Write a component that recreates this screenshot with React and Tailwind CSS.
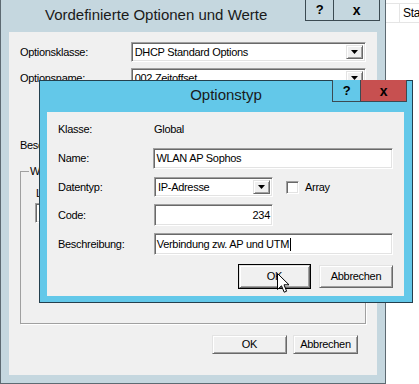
import React from "react";

const sunken =
  "border border-t-[#a0a0a0] border-l-[#a0a0a0] border-b-white border-r-white shadow-[inset_1px_1px_0_#696969,inset_-1px_-1px_0_#e3e3e3] bg-white";
const raised =
  "border border-t-[#e3e3e3] border-l-[#e3e3e3] border-b-[#696969] border-r-[#696969] shadow-[inset_1px_1px_0_#ffffff,inset_-1px_-1px_0_#a0a0a0] bg-[#f0f0f0]";

function Arrow() {
  return (
    <svg width="7" height="4" viewBox="0 0 7 4">
      <path d="M0 0H7L3.5 4Z" fill="#000" />
    </svg>
  );
}

function Combo({ w, text }) {
  return (
    <div className={`${sunken} ${w} h-[20px] flex items-stretch p-[2px]`}>
      <div className="flex-1 pl-[1px] flex items-center whitespace-nowrap overflow-hidden">{text}</div>
      <div className={`${raised} w-[17px] flex items-center justify-center`}>
        <Arrow />
      </div>
    </div>
  );
}

function Btn({ children, w, focus }) {
  const inner = (
    <div className={`${raised} ${w} h-[23px] flex items-center justify-center`}>{children}</div>
  );
  if (focus) return <div className="border border-black">{inner}</div>;
  return inner;
}

function CapButtons({ frame, red }) {
  return (
    <div className="absolute top-[-1px] right-[5px] flex h-[22px]">
      <div className={`w-[29px] border border-t-0 border-[#3b4a52] ${frame} flex items-center justify-center font-bold text-[13px] text-black`}>
        ?
      </div>
      <div className={`w-[46px] border border-t-0 border-l-0 border-[#3b4a52] ${red ? "bg-[#c75050]" : frame} flex items-center justify-center font-bold text-[14px] text-black`}>
        x
      </div>
    </div>
  );
}

export default function App() {
  return (
    <div className="relative w-[419px] h-[384px] overflow-hidden bg-white font-['Liberation_Sans',Arial,sans-serif] text-[11px] tracking-[-0.3px] text-black leading-none">
      {/* background list header */}
      <div className="mt-[3px] h-[20px] border-t border-b border-[#e5e5e5] flex">
        <div className="w-[400px] shrink-0 border-r border-[#e5e5e5]" />
        <div className="pl-[3px] flex items-center text-[12px] whitespace-nowrap">Status</div>
      </div>

      {/* back window */}
      <div className="absolute left-0 top-[-1px] w-[386px] h-[385px] border border-[#5d6a72] bg-[#c5d7df] flex flex-col">
        <div className="relative h-[32px] shrink-0">
          <div className="pl-[44px] pt-[7px] text-[15px] tracking-normal text-[#1a1a1a]">
            Vordefinierte Optionen und Werte
          </div>
          <CapButtons frame="bg-[#c5d7df]" />
        </div>
        <div className="mx-[8px] mb-[8px] flex-1 bg-[#f0f0f0] flex flex-col px-[11px] pt-[10px]">
          <div className="flex items-center h-[20px]">
            <div className="w-[111px]">Optionsklasse:</div>
            <Combo w="w-[236px]" text="DHCP Standard Options" />
          </div>
          <div className="flex items-center h-[20px] mt-[6px]">
            <div className="w-[111px]">Optionsname:</div>
            <Combo w="w-[236px]" text="002 Zeitoffset" />
          </div>
          <div className="mt-[52px]">Beschreibung:</div>
          <div className="relative mt-[20px] h-[153px] border border-[#a0a0a0] shadow-[1px_1px_0_#ffffff]">
            <div className="absolute left-[8px] top-[-6px] bg-[#f0f0f0] px-[1px]">Wert</div>
            <div className="pl-[15px] pt-[16px]">Long:</div>
            <div className={`${sunken} ml-[14px] mt-[4px] w-[200px] h-[20px] pl-[3px] flex items-center`}>0x0</div>
          </div>
          <div className="flex justify-end gap-[6px] mt-[11px] pr-[8px]">
            <div className={`${raised} w-[75px] h-[19px] flex items-center justify-center`}>OK</div>
            <div className={`${raised} w-[65px] h-[19px] flex items-center justify-center`}>Abbrechen</div>
          </div>
        </div>
      </div>

      {/* front window */}
      <div className="absolute left-[39px] top-[80px] w-[374px] h-[223px] border border-[#24404e] bg-[#63c8e9] flex flex-col">
        <div className="relative h-[31px] shrink-0">
          <div className="text-center pt-[6px] text-[15px] tracking-normal text-[#1a1a1a]">Optionstyp</div>
          <CapButtons frame="bg-[#63c8e9]" red />
        </div>
        <div className="ml-[7px] mr-[8px] mb-[6px] flex-1 bg-[#f0f0f0] flex flex-col px-[11px] pt-[12px]">
          <div className="flex items-center h-[11px]">
            <div className="w-[96px]">Klasse:</div>
            <div>Global</div>
          </div>
          <div className="flex items-center mt-[13px]">
            <div className="w-[96px]">Name:</div>
            <div className={`${sunken} w-[241px] h-[21px] pl-[2px] flex items-center`}>WLAN AP Sophos</div>
          </div>
          <div className="flex items-center mt-[8px]">
            <div className="w-[96px]">Datentyp:</div>
            <Combo w="w-[119px]" text="IP-Adresse" />
            <div className={`${sunken} w-[13px] h-[13px] ml-[13px]`} />
            <div className="ml-[6px]">Array</div>
          </div>
          <div className="flex items-center mt-[7px]">
            <div className="w-[96px]">Code:</div>
            <div className={`${sunken} w-[119px] h-[22px] pr-[2px] flex items-center justify-end`}>234</div>
          </div>
          <div className="flex items-center mt-[7px]">
            <div className="w-[96px]">Beschreibung:</div>
            <div className={`${sunken} w-[240px] h-[22px] pl-[2px] flex items-center`}>
              Verbindung zw. AP und UTM<span className="inline-block w-[1px] h-[13px] bg-black ml-[1px]" />
            </div>
          </div>
          <div className="flex justify-end items-center gap-[8px] mt-[9px]">
            <Btn w="w-[71px]" focus>OK</Btn>
            <Btn w="w-[74px]">Abbrechen</Btn>
          </div>
        </div>
      </div>

      {/* mouse cursor */}
      <svg className="absolute left-[277px] top-[273px]" width="13" height="21" viewBox="0 0 13 21">
        <path d="M0.5 0.5V16.5L4.5 12.8L7.2 19.2L9.6 18.2L7 11.8H12Z" fill="#fff" stroke="#000" strokeWidth="1" strokeLinejoin="miter" />
      </svg>
    </div>
  );
}
